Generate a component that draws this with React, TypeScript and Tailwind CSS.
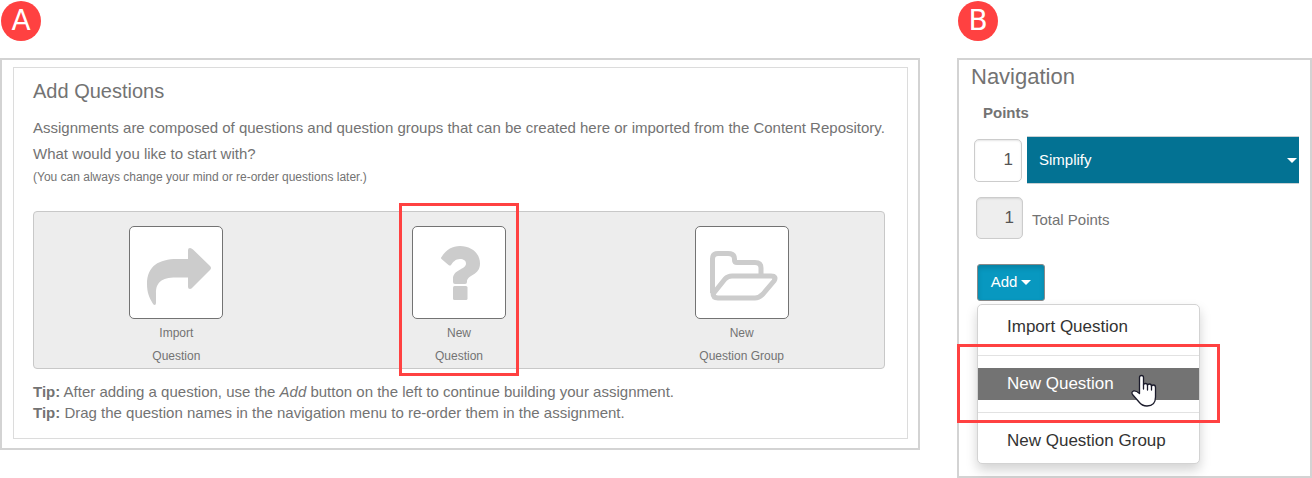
import type { ReactNode } from "react";

function Badge({ children }: { children: ReactNode }) {
  return (
    <div className="ml-px flex size-10 items-center justify-center rounded-full bg-[#ff4141] font-['DejaVu_Sans',sans-serif] text-[28px] leading-10 text-white">
      {children}
    </div>
  );
}

function ShareIcon() {
  return (
    <svg width="66" height="60" viewBox="0 0 66 60" fill="#ccc" aria-hidden="true">
      <path d="M42 4Q42 2 44 2Q45.500 2 47 3.500L64 20Q66 22 64 24L47 41Q45.500 43 44 43Q42 43 42 41V31.500H30C15 31.500 10 37 10 47V57Q10 59 8.500 59Q7.500 59 6.500 57C3 51 1 46 1 38C1 20 13 13 31 13H42Z" />
    </svg>
  );
}

function QuestionIcon() {
  return (
    <svg width="42" height="62" viewBox="0 0 42 62" fill="#ccc" aria-hidden="true">
      <path d="M1.500 14Q.5 13 1.500 12C6 5 12 1 20 1C31 1 40 8 40 18.500C40 31 27 29 27 37Q27 39 25 39H15Q13 39 13 37V34C13 24 26 25 26 18.500C26 15.500 23.500 14 20 14C15.500 14 13 17 11 20Q10 21 8.500 20Z" />
      <rect x="13" y="41" width="14.500" height="14" rx="1.500" />
    </svg>
  );
}

function FolderIcon() {
  return (
    <svg width="70" height="52" viewBox="0 0 70 52" fill="none" stroke="#ccc" strokeWidth="5" strokeLinejoin="round" aria-hidden="true">
      <path d="M3.500 43V9Q3.500 3.500 9 3.500H19Q25.500 3.500 25.500 9V10Q25.500 12.500 28 12.500H46Q52 12.500 52 18V25" />
      <path d="M4 44L16 29Q19 26 23 26H62Q68 26 65 31L54 44Q50 48 46 48H9Q4 48 4 43" />
    </svg>
  );
}

function HandCursor() {
  return (
    <svg
      className="pointer-events-none absolute left-[153px] top-[6px]"
      width="26"
      height="34"
      viewBox="0 0 26 34"
      fill="#fff"
      stroke="#1b1b2b"
      strokeWidth="1.300"
      strokeLinejoin="round"
      strokeLinecap="round"
      aria-hidden="true"
    >
      <path d="M8.500 19.500V3.500Q8.500 1.500 10.500 1.500Q12.500 1.500 12.500 3.500V11Q12.500 9.500 14.500 9.500Q16.500 9.500 16.500 11.500Q16.500 10 18.500 10Q20.500 10 20.500 12.500Q20.500 11 22.500 11Q24.500 11 24.500 13.500V23Q24.500 32 16 32Q11 32 8 28L1.500 20.500Q0 18 2.500 17Q5 16.500 8.500 19.500Z" />
      <path d="M12.500 11V15M16.500 11.500V16M20.500 12.500V16" />
    </svg>
  );
}

function Caret() {
  return (
    <svg width="10" height="5" viewBox="0 0 10 5" fill="currentColor" aria-hidden="true">
      <path d="M0 0H10L5 5Z" />
    </svg>
  );
}

const choices = [
  { icon: <ShareIcon />, top: "Import", bottom: "Question", highlighted: false },
  { icon: <QuestionIcon />, top: "New", bottom: "Question", highlighted: true },
  { icon: <FolderIcon />, top: "New", bottom: "Question Group", highlighted: false },
];

function AddQuestions() {
  return (
    <section className="min-w-0 flex-1">
      <Badge>A</Badge>
      <div className="mt-[17px] border-2 border-[#d3d3d3] pt-[7px] pr-[10px] pb-[9px] pl-[11px]">
        <div className="border border-[#dcdcdc] pt-[10px] pr-[22px] pb-[15px] pl-[19px]">
          <h1 className="text-[20px] leading-[26px]">Add Questions</h1>
          <p className="mt-[11px] text-[15px] leading-[26px]">
            Assignments are composed of questions and question groups that can be created here or
            imported from the Content Repository.
            <br />
            What would you like to start with?
          </p>
          <p className="text-[12px] leading-5">
            (You can always change your mind or re-order questions later.)
          </p>

          <div className="mt-6 grid grid-cols-3 justify-items-center rounded-[4px] border border-[#c8c8c8] bg-[#ededed] px-px pt-[14px]">
            {choices.map((choice) => (
              <div key={choice.top + choice.bottom} className="relative">
                <button type="button" className="block w-[94px] text-center text-[12px] leading-[23px]">
                  <span className="mb-[3px] flex h-[93px] items-center justify-center rounded-[5px] border border-[#737373] bg-white pt-[6px] pl-[5px]">
                    {choice.icon}
                  </span>
                  {choice.top}
                  <br />
                  {choice.bottom}
                </button>
                {choice.highlighted && (
                  <div className="pointer-events-none absolute -inset-x-[13px] -top-[23px] -bottom-[8px] border-3 border-[#ff4141]" />
                )}
              </div>
            ))}
          </div>

          <p className="mt-3 text-[15px] leading-[21px]">
            <b>Tip:</b> After adding a question, use the <i>Add</i> button on the left to continue
            building your assignment.
            <br />
            <b>Tip:</b> Drag the question names in the navigation menu to re-order them in the
            assignment.
          </p>
        </div>
      </div>
    </section>
  );
}

function Navigation() {
  return (
    <section className="w-[355px] shrink-0">
      <Badge>B</Badge>
      <div className="mt-[17px] border-2 border-[#d3d3d3] pt-[3px] pr-[11px] pb-3 pl-3">
        <h2 className="text-[22px] leading-7">Navigation</h2>
        <label htmlFor="points" className="mt-3 ml-3 block text-[15px] leading-5 font-bold">
          Points
        </label>

        <div className="mt-[13px] ml-[3px] flex items-center gap-[5px]">
          <input
            id="points"
            defaultValue="1"
            className="h-[43px] w-12 rounded-[5px] border border-[#ccc] bg-white pr-2 text-right text-[17px] text-[#555] shadow-[inset_0_1px_2px_rgba(0,0,0,0.1)]"
          />
          <button
            type="button"
            aria-haspopup="menu"
            className="flex h-12 flex-1 items-center justify-between border-y border-[#c8d0d3] bg-[#037293] pr-[2px] pl-3 text-[15px] text-white"
          >
            Simplify
            <Caret />
          </button>
        </div>

        <div className="mt-[13px] ml-[5px] flex items-center gap-[9px]">
          <input
            id="total"
            readOnly
            defaultValue="1"
            className="h-[42px] w-[47px] rounded-[5px] border border-[#ccc] bg-[#eee] pr-2 text-right text-[17px] text-[#555] shadow-[inset_0_1px_2px_rgba(0,0,0,0.1)]"
          />
          <label htmlFor="total" className="pt-1 text-[15px]">
            Total Points
          </label>
        </div>

        <div className="mt-[25px] ml-[6px]">
          <button
            type="button"
            aria-expanded="true"
            className="flex h-[37px] w-[68px] items-center justify-center gap-1 rounded-[3px] border border-[#8a8a8a] bg-[#0898c0] text-[15px] text-white shadow-[inset_0_3px_5px_rgba(0,0,0,0.15)]"
          >
            Add
            <Caret />
          </button>

          <div
            role="menu"
            className="mt-[3px] w-[223px] rounded-[5px] border border-[#d3d3d3] bg-white py-[6px] text-[17px] leading-8 text-[#333] shadow-[0_6px_12px_rgba(0,0,0,0.175)]"
          >
            <button type="button" role="menuitem" className="block w-full pl-[29px] text-left">
              Import Question
            </button>
            <div className="my-3 h-px bg-[#e2e2e2]" />
            <div className="relative">
              <button
                type="button"
                role="menuitem"
                className="block w-full bg-[#737373] pl-[29px] text-left text-white"
              >
                New Question
              </button>
              <HandCursor />
              <div className="pointer-events-none absolute -inset-x-[21px] -top-6 -bottom-[23px] border-3 border-[#ff4141]" />
            </div>
            <div className="my-3 h-px bg-[#e2e2e2]" />
            <button type="button" role="menuitem" className="block w-full pl-[29px] text-left">
              New Question Group
            </button>
          </div>
        </div>
      </div>
    </section>
  );
}

export default function App() {
  return (
    <main className="flex items-start gap-[37px] bg-white pt-px font-['Liberation_Sans',Arial,sans-serif] text-[#737373]">
      <AddQuestions />
      <Navigation />
    </main>
  );
}
